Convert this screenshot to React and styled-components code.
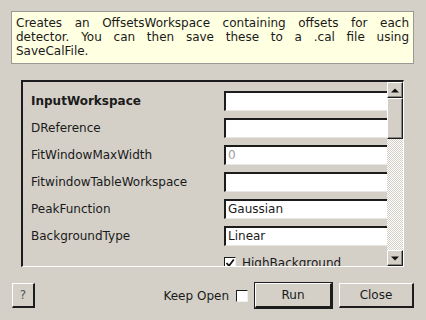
import React from 'react'
import styled, { createGlobalStyle } from 'styled-components'

const GlobalStyle = createGlobalStyle`
  html, body {
    margin: 0;
    padding: 0;
    background: #d4d0c8;
    font-family: "DejaVu Sans", sans-serif;
    font-size: 12px;
    color: #1a1a1a;
  }
`

const Dialog = styled.div`
  width: 426px;
  height: 320px;
  box-sizing: border-box;
  padding-top: 11px;
  display: flex;
  flex-direction: column;
`
const Description = styled.div`
  margin: 0 12px 0 11px;
  padding: 4px 4px 5px;
  background: #ffffe1;
  border: 1px solid #9a9a94;
  line-height: 14px;
  color: #1a1a1a;
`
const Justified = styled.div`
  text-align: justify;
  text-align-last: justify;
`
const Frame = styled.div`
  margin: 16px 22px 0 21px;
  height: 184px;
  border-style: solid;
  border-width: 2px 1px 1px 2px;
  border-color: #1c1c1c #ffffff #ffffff #1c1c1c;
  display: flex;
  overflow: hidden;
`
const Viewport = styled.div`
  flex: 1;
  overflow: hidden;
  padding: 9px 0 0 8px;
  display: flex;
  flex-direction: column;
  gap: 7px;
`
const Row = styled.div`
  display: flex;
  align-items: center;
  height: 20px;
  flex-shrink: 0;
`
const Label = styled.span`
  width: 193px;
  flex-shrink: 0;
  font-weight: ${p => (p.$bold ? 'bold' : 'normal')};
  white-space: nowrap;
`
const Field = styled.div`
  width: 180px;
  height: 20px;
  flex-shrink: 0;
  box-sizing: border-box;
  background: #fff;
  border-style: solid;
  border-width: 2px 1px 1px 2px;
  border-color: #1c1c1c #e8e6e2 #e8e6e2 #1c1c1c;
  padding-left: 2px;
  line-height: 17px;
  color: ${p => (p.$muted ? '#a0a0a0' : '#1a1a1a')};
`
const CheckRow = styled.label`
  display: flex;
  align-items: center;
  gap: 6px;
  margin-left: 193px;
  white-space: nowrap;
`
const Box = styled.span`
  width: 12px;
  height: 12px;
  box-sizing: border-box;
  background: #fff;
  border-style: solid;
  border-width: 1px;
  border-color: #1c1c1c #f0f0f0 #f0f0f0 #1c1c1c;
  display: flex;
  align-items: center;
  justify-content: center;
  flex-shrink: 0;
`
const ScrollBar = styled.div`
  width: 16px;
  flex-shrink: 0;
  display: flex;
  flex-direction: column;
  background: repeating-conic-gradient(#d4d0c8 0 25%, #ffffff 0 50%) 0 0 / 2px 2px;
`
const Raised = styled.div`
  box-sizing: border-box;
  background: #d4d0c8;
  border-style: solid;
  border-width: 1px;
  border-color: #ffffff #1c1c1c #1c1c1c #ffffff;
  box-shadow: inset -1px -1px 0 #8a8782;
`
const ArrowButton = styled(Raised)`
  height: 16px;
  display: flex;
  align-items: center;
  justify-content: center;
`
const Thumb = styled(Raised)`
  height: 41px;
`
const Track = styled.div`
  flex: 1;
`
const Footer = styled.div`
  display: flex;
  align-items: center;
  margin-top: 16px;
  padding: 0 12px;
  height: 25px;
`
const Button = styled.button`
  font-family: "DejaVu Sans", sans-serif;
  font-size: 12px;
  color: ${p => (p.$dim ? '#555' : '#1a1a1a')};
  width: ${p => p.$w}px;
  height: 25px;
  padding: 0;
  box-sizing: border-box;
  background: #d4d0c8;
  border-style: solid;
  border-width: 1px 2px 2px 1px;
  border-color: #ffffff #1c1c1c #1c1c1c #ffffff;
  outline: ${p => (p.$default ? '1px solid #1c1c1c' : 'none')};
  outline-offset: 0;
  margin-left: ${p => p.$ml || 0}px;
`
const Spacer = styled.div`
  flex: 1;
`
const KeepOpen = styled.label`
  display: flex;
  align-items: center;
  gap: 7px;
  margin-right: 7px;
`

const Tri = ({ up }) => (
  <svg width="8" height="5" viewBox="0 0 8 5">
    <path d={up ? 'M0 4.5 L4 0.5 L8 4.5 Z' : 'M0 0.5 L8 0.5 L4 4.5 Z'} fill="#111" />
  </svg>
)

const Tick = () => (
  <svg width="10" height="10" viewBox="0 0 10 10">
    <path d="M1.5 5 L4 7.8 L8.8 1.5" fill="none" stroke="#111" strokeWidth="1.8" />
  </svg>
)

const rows = [
  { label: 'InputWorkspace', bold: true, value: '' },
  { label: 'DReference', value: '' },
  { label: 'FitWindowMaxWidth', value: '0', muted: true },
  { label: 'FitwindowTableWorkspace', value: '' },
  { label: 'PeakFunction', value: 'Gaussian' },
  { label: 'BackgroundType', value: 'Linear' },
]

const App = () => {
  return (
    <Dialog>
      <GlobalStyle />
      <Description>
        <Justified>Creates an OffsetsWorkspace containing offsets for each</Justified>
        <Justified>detector. You can then save these to a .cal file using</Justified>
        <div>SaveCalFile.</div>
      </Description>

      <Frame>
        <Viewport>
          {rows.map(r => (
            <Row key={r.label}>
              <Label $bold={r.bold}>{r.label}</Label>
              <Field $muted={r.muted}>{r.value}</Field>
            </Row>
          ))}
          <Row>
            <CheckRow>
              <Box>
                <Tick />
              </Box>
              HighBackground
            </CheckRow>
          </Row>
        </Viewport>
        <ScrollBar>
          <ArrowButton>
            <Tri up />
          </ArrowButton>
          <Thumb />
          <Track />
          <ArrowButton>
            <Tri />
          </ArrowButton>
        </ScrollBar>
      </Frame>

      <Footer>
        <Button $w={23} $dim>?</Button>
        <Spacer />
        <KeepOpen>
          Keep Open
          <Box />
        </KeepOpen>
        <Button $w={77} $default>Run</Button>
        <Button $w={75} $ml={7}>Close</Button>
      </Footer>
    </Dialog>
  )
}

export default App
